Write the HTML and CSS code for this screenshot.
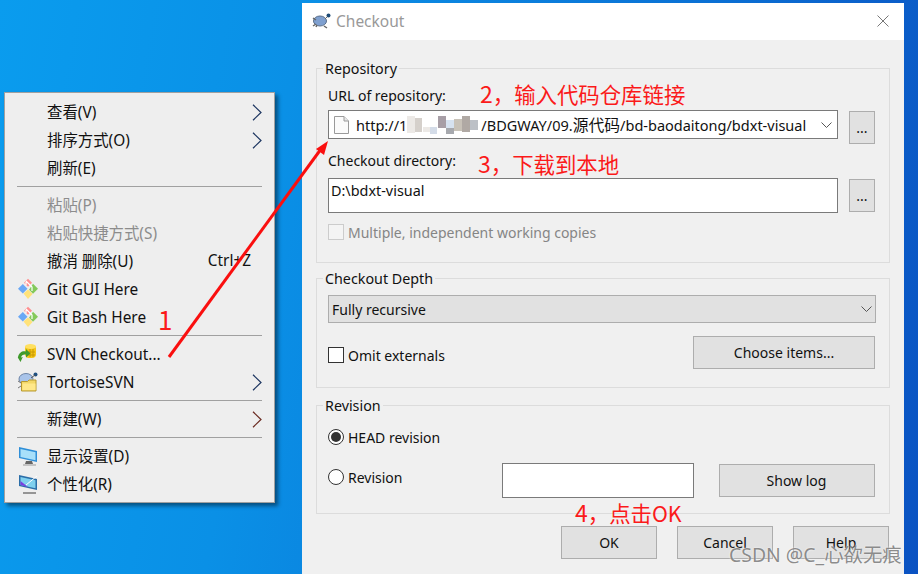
FILE: index.html
```html
<!DOCTYPE html>
<html lang="zh-CN">
<head>
<meta charset="utf-8">
<title>Checkout</title>
<link rel="stylesheet" href="styles.css">
</head>
<body>
<div class="desktop">

  <div class="menu">
    <div class="row"><span class="ico"></span><span class="lbl">查看(V)</span><svg class="sub" viewBox="0 0 10 17"><path d="M1 .8 9 8.500 1 16.200"/></svg></div>
    <div class="row"><span class="ico"></span><span class="lbl">排序方式(O)</span><svg class="sub" viewBox="0 0 10 17"><path d="M1 .8 9 8.500 1 16.200"/></svg></div>
    <div class="row"><span class="ico"></span><span class="lbl">刷新(E)</span></div>
    <div class="sep"></div>
    <div class="row off"><span class="ico"></span><span class="lbl">粘贴(P)</span></div>
    <div class="row off"><span class="ico"></span><span class="lbl">粘贴快捷方式(S)</span></div>
    <div class="row"><span class="ico"></span><span class="lbl">撤消 删除(U)</span><span class="key">Ctrl+Z</span></div>
    <div class="row latin"><span class="ico"><svg viewBox="0 0 22 22"><path fill="#ff8f8f" d="M11 .8 15 4.800 11 8.800 7 4.800z"/><path fill="#84c95a" d="M16 5.800 21 10.800 16 15.800 12 11.800z"/><path fill="#ffe27a" d="M6.500 15.500 11 11.500 15.500 16 11 21z"/><path fill="#6aa8f5" d="M5.800 6 10.500 10.800 5.800 15.600 1 10.800z"/><path stroke="#fff" stroke-width="1.200" d="M9 3l6 6v4M9 4v3"/></svg></span><span class="lbl">Git GUI Here</span></div>
    <div class="row latin"><span class="ico"><svg viewBox="0 0 22 22"><path fill="#ff8f8f" d="M11 .8 15 4.800 11 8.800 7 4.800z"/><path fill="#84c95a" d="M16 5.800 21 10.800 16 15.800 12 11.800z"/><path fill="#ffe27a" d="M6.500 15.500 11 11.500 15.500 16 11 21z"/><path fill="#6aa8f5" d="M5.800 6 10.500 10.800 5.800 15.600 1 10.800z"/><path stroke="#fff" stroke-width="1.200" d="M9 3l6 6v4M9 4v3"/></svg></span><span class="lbl">Git Bash Here</span></div>
    <div class="sep"></div>
    <div class="row latin"><span class="ico"><svg viewBox="0 0 22 22"><rect x="8" y="2" width="11" height="13" rx="4" fill="#f5c518"/><ellipse cx="13.500" cy="3.500" rx="5.500" ry="2.500" fill="#ffe060"/><path stroke="#c99a00" d="M13 6v8M16 6v8M9 9h9M9 12h9"/><path fill="#3f9a2c" d="M1 14C2 9 6 7.500 9 8.500V6l4.500 4.500L9 14.500V11.500C6.500 11 4.500 12 4 14.500L5.800 14 3.500 19 .8 14.500z"/></svg></span><span class="lbl">SVN Checkout...</span></div>
    <div class="row latin"><span class="ico"><svg viewBox="0 0 22 22"><ellipse cx="9" cy="8" rx="7" ry="5.500" fill="#a9c4ea" stroke="#6f86a8"/><circle cx="18.500" cy="3.500" r="2" fill="#1f4f7f"/><path d="M14 7l4-3" stroke="#555"/><path fill="#f3d868" stroke="#b89a30" d="M4.500 10.500h6l1.500-1.500h7v11h-14.500z"/><path fill="#ffe88a" d="M5.500 12.500h13v6.500h-13z"/><path d="M1 10l3 2M1 17l3-2" stroke="#777"/></svg></span><span class="lbl">TortoiseSVN</span><svg class="sub" viewBox="0 0 10 17"><path d="M1 .8 9 8.500 1 16.200"/></svg></div>
    <div class="sep"></div>
    <div class="row"><span class="ico"></span><span class="lbl">新建(W)</span><svg class="sub warm" viewBox="0 0 10 17"><path d="M1 .8 9 8.500 1 16.200"/></svg></div>
    <div class="sep"></div>
    <div class="row"><span class="ico"><svg viewBox="0 0 22 22"><path fill="#2f8fd8" d="M2 2 20 6v11L2 13z"/><path fill="#a8e0fa" d="M3.500 4 18.500 7.300v8L3.500 12z"/><path fill="#666" d="M9 16h6l1 3H8z"/><path stroke="#999" d="M6 20h13"/></svg></span><span class="lbl">显示设置(D)</span></div>
    <div class="row"><span class="ico"><svg viewBox="0 0 22 22"><path fill="#2b6ea8" d="M2 2 20 6v11L2 13z"/><path fill="#7fd0ee" d="M3.500 4 18.500 7.300v8L3.500 12z"/><path fill="#7a3fe0" d="M3.500 8 11 14 3.500 12z"/><path stroke="#fff" d="M9 12 20 3"/><path stroke="#777" stroke-width="1.500" d="M6 20h13"/></svg></span><span class="lbl">个性化(R)</span></div>
  </div>

  <div class="dialog">
    <div class="titlebar">
      <svg class="turtle" viewBox="0 0 20 16"><ellipse cx="9" cy="8" rx="6.500" ry="5" fill="#7fa0d0" stroke="#5c6f8a"/><path d="M2 5 5 7M2 13l3-2M13 13l3 2M5 14l1-2" stroke="#666" stroke-width="1.500"/><path d="M14 6l3-3" stroke="#666"/><circle cx="17.500" cy="2.500" r="2" fill="#1d4a75"/></svg>
      <span class="title">Checkout</span>
      <svg class="close" viewBox="0 0 12 12"><path d="M.5.500l11 11M11.500.500l-11 11"/></svg>
    </div>
    <div class="body">
      <section class="group g-repo">
        <div class="legend">Repository</div>
        <div class="label l-url">URL of repository:</div>
        <div class="field-row r-url">
          <div class="combo">
            <svg class="file" viewBox="0 0 15 18"><path d="M.5.500h9.500l4.500 4.500v12.500h-14z" fill="#fbfbfb" stroke="#9a9a9a"/><path d="M10 .5v4.500h4.500" fill="#e8e8e8" stroke="#9a9a9a"/></svg>
            <span class="url">http://1<svg class="mosaic" viewBox="0 0 74 18"><rect x="0" y="0" width="74" height="18" fill="#fff"/><rect x="0" y="0" width="8" height="17" fill="#ece9e6"/><rect x="8" y="2" width="7" height="14" fill="#d5d0cb"/><rect x="16" y="11" width="8" height="5" fill="#ece9e6"/><rect x="23" y="11" width="7" height="7" fill="#d4dce8"/><rect x="31" y="0" width="8" height="12" fill="#a79ea6"/><rect x="39" y="4" width="8" height="10" fill="#d6e2f0"/><rect x="39" y="12" width="8" height="6" fill="#a7a9ae"/><rect x="47" y="3" width="8" height="12" fill="#c8c2b8"/><rect x="55" y="0" width="8" height="16" fill="#b0a9a4"/><rect x="63" y="4" width="8" height="10" fill="#bcc0c6"/></svg>/BDGWAY/09.<span class="cjk">源代码</span>/bd-baodaitong/bdxt-visual</span>
            <svg class="chev" viewBox="0 0 11 6"><path d="M.5.500 5.500 5.500 10.500.500"/></svg>
          </div>
          <button class="btn dots b-url">...</button>
        </div>
        <div class="label l-dir">Checkout directory:</div>
        <div class="field-row r-dir">
          <div class="input i-dir">D:\bdxt-visual</div>
          <button class="btn dots">...</button>
        </div>
        <div class="check-row off r-multi"><span class="box"></span><span>Multiple, independent working copies</span></div>
      </section>

      <section class="group g-depth">
        <div class="legend">Checkout Depth</div>
        <div class="select"><span>Fully recursive</span><svg class="chev" viewBox="0 0 11 6"><path d="M.5.500 5.500 5.500 10.500.500"/></svg></div>
        <div class="omit-row">
          <div class="check-row r-omit"><span class="box dark"></span><span>Omit externals</span></div>
          <button class="btn choose">Choose items...</button>
        </div>
      </section>

      <section class="group g-rev">
        <div class="legend">Revision</div>
        <div class="check-row r-head"><span class="radio on"></span><span>HEAD revision</span></div>
        <div class="rev-row">
          <div class="check-row r-rev"><span class="radio"></span><span>Revision</span></div>
          <div class="input i-rev"></div>
          <button class="btn showlog">Show log</button>
        </div>
      </section>

      <div class="actions">
        <button class="btn act">OK</button>
        <button class="btn act">Cancel</button>
        <button class="btn act">Help</button>
      </div>
    </div>
  </div>

  <svg class="arrow" viewBox="0 0 918 574"><path class="shaft" d="M169 357 321 149"/><path class="head" d="M328 141 316 149 324 155z"/></svg>
  <div class="note n1">1</div>
  <div class="note n2"><span class="num">2</span>，输入代码仓库链接</div>
  <div class="note n3"><span class="num">3</span>，下载到本地</div>
  <div class="note n4"><span class="num">4</span>，点击OK</div>
  <div class="mark">CSDN @C_心欲无痕</div>
</div>
</body>
</html>
```

FILE: styles.css
```css
* { box-sizing: border-box; }
html, body { margin: 0; padding: 0; }
body {
  width: 918px;
  height: 574px;
  overflow: hidden;
  font-family: "Noto Sans", "Noto Sans CJK SC", sans-serif;
  font-size: 14px;
  color: #111;
}
.desktop {
  position: relative;
  width: 918px;
  height: 574px;
  overflow: hidden;
  background: linear-gradient(100deg, #0a9cee 0%, #0a90e6 30%, #0b70d4 70%, #0a52c2 100%);
}

/* context menu */
.menu {
  position: absolute;
  left: 4px;
  top: 92px;
  width: 271px;
  height: 411px;
  padding: 5px 0;
  background: #eeeeee;
  border: 1px solid #a0a0a0;
  box-shadow: 3px 3px 4px rgba(0, 0, 0, .45);
  font-size: 15.400px;
}
.row {
  display: flex;
  align-items: center;
  height: 28px;
  padding-right: 12px;
}
.row.off { color: #8c8c8c; }
.ico {
  width: 22px;
  height: 22px;
  margin-left: 12px;
  margin-right: 8px;
  flex: none;
}
.ico svg { display: block; width: 22px; height: 22px; fill: none; }
.lbl { white-space: nowrap; padding-bottom: 2px; }
.latin .lbl { padding-bottom: 0; }
.key { margin-left: auto; margin-right: 11px; padding-bottom: 2px; }
.sub { width: 10px; height: 17px; margin-left: auto; fill: none; stroke: #1c3560; stroke-width: 1.200; }
.sub.warm { stroke: #6a2a20; }
.sep { height: 1px; margin: 4px 12px 4px 12px; background: #a0a0a0; }

/* dialog */
.dialog {
  position: absolute;
  left: 302px;
  top: 3px;
  width: 602px;
  height: 580px;
  background: #f0f0f0;
}
.titlebar {
  display: flex;
  align-items: center;
  height: 37px;
  padding: 0 15px 2px 9px;
  background: #fff;
}
.turtle { width: 20px; height: 16px; fill: none; }
.title { margin-left: 5px; color: #999; font-size: 15.500px; }
.close { width: 12px; height: 12px; margin-left: auto; fill: none; stroke: #777; stroke-width: 1; }
.body { padding: 28px 14px 0 14px; }
.group {
  width: 574px;
  padding: 0 14px 0 11px;
  border: 1px solid #dcdcdc;
}
.legend {
  width: fit-content;
  height: 20px;
  line-height: 20px;
  margin: -10px 0 0 -5px;
  padding: 0 2px;
  background: #f0f0f0;
  font-size: 14.300px;
}
.label { height: 20px; line-height: 20px; }
.l-url { margin-top: 7px; }
.l-dir { margin-top: 7px; }
.field-row {
  display: flex;
  align-items: flex-start;
  justify-content: space-between;
}
.r-url { margin-top: 4px; height: 34px; }
.r-dir { margin-top: 7px; height: 35px; }
.combo, .input {
  background: #fff;
  border: 1px solid #7a7a7a;
}
.combo {
  display: flex;
  align-items: center;
  width: 510px;
  height: 29px;
  padding: 0 5px;
}
.file { width: 15px; height: 18px; flex: none; fill: none; }
.url {
  margin-left: 7px;
  font-size: 14.500px;
  white-space: nowrap;
  display: flex;
  align-items: center;
}
.cjk { font-size: 15.800px; }
.mosaic { width: 74px; height: 18px; flex: none; }
.chev { width: 11px; height: 6px; margin-left: auto; flex: none; fill: none; stroke: #555; stroke-width: 1; }
.input { padding: 0 2px; }
.i-dir { width: 510px; height: 35px; line-height: 24px; font-size: 14.400px; }
.btn {
  display: block;
  padding: 0;
  font: inherit;
  color: #111;
  background: #e1e1e1;
  border: 1px solid #adadad;
  border-radius: 0;
}
.dots { width: 26px; height: 33px; margin-top: 1px; line-height: 1; }
.b-url { margin-top: 1px; }
.check-row {
  display: flex;
  align-items: center;
  gap: 4px;
  height: 20px;
}
.check-row.off { color: #858585; }
.r-multi { margin-top: 9px; margin-bottom: 20px; }
.box {
  width: 16px;
  height: 16px;
  border: 1px solid #ccc;
  background: #f4f4f4;
  flex: none;
}
.box.dark { border-color: #333; background: #fff; }
.g-depth { margin-top: 15px; padding-bottom: 18px; }
.select {
  display: flex;
  align-items: center;
  width: 548px;
  height: 28px;
  margin-top: 6px;
  padding: 0 3px;
  background: #e1e1e1;
  border: 1px solid #adadad;
}
.omit-row {
  display: flex;
  align-items: flex-start;
  justify-content: space-between;
  height: 33px;
  margin-top: 13px;
}
.r-omit { margin-top: 9px; }
.choose { width: 182px; height: 33px; }
.g-rev { margin-top: 17px; padding-bottom: 15px; }
.r-head { margin-top: 11px; }
.rev-row {
  display: flex;
  align-items: flex-start;
  height: 35px;
  margin-top: 16px;
}
.r-rev { margin-top: 4px; }
.radio {
  position: relative;
  width: 16px;
  height: 16px;
  border: 1px solid #333;
  border-radius: 50%;
  background: #fff;
  flex: none;
}
.radio.on::after {
  content: "";
  position: absolute;
  inset: 2px;
  border-radius: 50%;
  background: #333;
}
.i-rev { width: 192px; height: 35px; margin-left: 99px; }
.showlog { width: 156px; height: 33px; margin-top: 1px; margin-left: 25px; }
.actions {
  display: flex;
  justify-content: flex-end;
  gap: 20px;
  width: 573px;
  margin-top: 12px;
}
.act { width: 96px; height: 33px; }

/* annotations */
.arrow { position: absolute; left: 0; top: 0; width: 918px; height: 574px; pointer-events: none; }
.shaft { fill: none; stroke: #fa0f0f; stroke-width: 3; }
.head { fill: #fa0f0f; }
.note {
  position: absolute;
  color: #fb1a1a;
  font-family: "Noto Sans CJK SC", sans-serif;
  font-size: 21.400px;
  line-height: 28px;
  white-space: nowrap;
}
.num { font-size: 23px; }
.n1 { left: 158px; top: 301px; font-size: 26px; line-height: 36px; }
.n2 { left: 480px; top: 79px; }
.n3 { left: 478px; top: 149px; }
.n4 { left: 575px; top: 498px; }
.mark {
  position: absolute;
  left: 729px;
  top: 543px;
  color: rgba(120, 120, 120, .85);
  font-size: 19.400px;
  line-height: 24px;
  white-space: nowrap;
  text-shadow: 0 0 2px rgba(255, 255, 255, .9);
}
```
